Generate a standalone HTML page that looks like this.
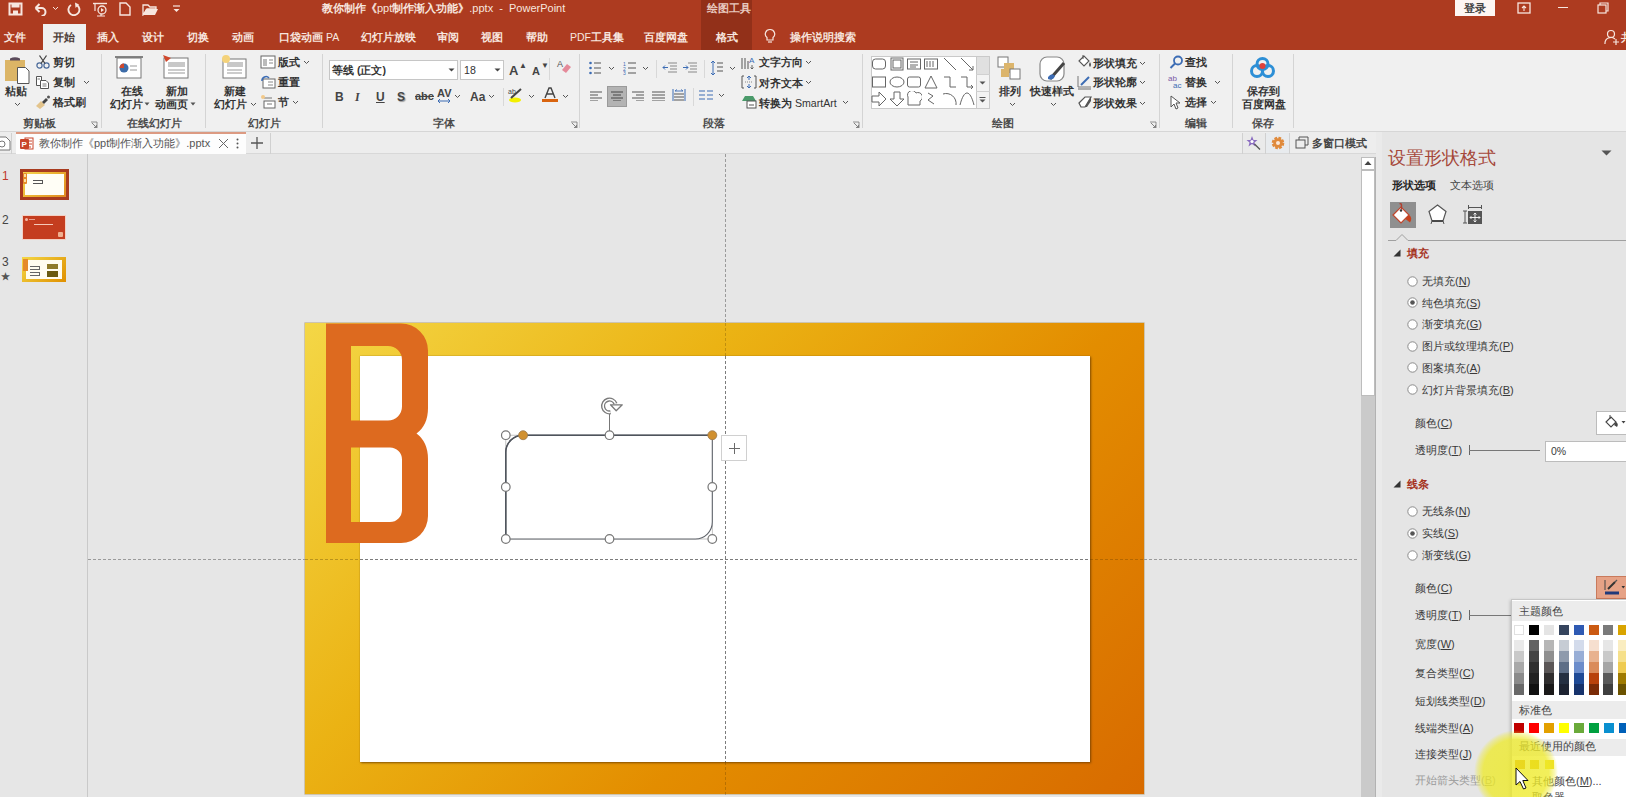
<!DOCTYPE html>
<html><head><meta charset="utf-8">
<style>
*{margin:0;padding:0;box-sizing:border-box}
html,body{width:1626px;height:797px;overflow:hidden;background:#e6e6e6;font-family:"Liberation Sans",sans-serif;position:relative}
.a{position:absolute}
.t{position:absolute;white-space:nowrap;line-height:1}
u{text-decoration:underline;text-underline-offset:1px}
</style></head><body>

<div class="a" style="left:0px;top:0px;width:1626px;height:50px;background:#ad3b20"></div>
<div class="a" style="left:701px;top:0px;width:51px;height:50px;background:#923019"></div>
<svg class="a" style="left:8px;top:2px;" width="15" height="14" viewBox="0 0 15 14"><path d="M1.5 1.5 H13.5 V12.5 H1.5 Z" fill="none" stroke="#f7e6df" stroke-width="2"/><rect x="3.5" y="1.5" width="8" height="4" fill="#f7e6df"/><rect x="5" y="8.5" width="5" height="4" fill="#f7e6df"/></svg>
<svg class="a" style="left:33px;top:2px;" width="15" height="14" viewBox="0 0 15 14"><path d="M2.5 6 L6.5 2 M2.5 6 L6.5 10" fill="none" stroke="#f7e6df" stroke-width="2"/><path d="M3 6 H8.5 A4 4 0 0 1 8.5 14" fill="none" stroke="#f7e6df" stroke-width="2"/></svg>
<svg class="a" style="left:52px;top:6px;" width="7" height="5" viewBox="0 0 7 5"><path d="M1 1 L3.5 3.5 L6 1" fill="none" stroke="#f7e6df" stroke-width="1"/></svg>
<svg class="a" style="left:67px;top:2px;" width="14" height="14" viewBox="0 0 14 14"><path d="M4 3 A5.5 5.5 0 1 0 9.5 2.8" fill="none" stroke="#f7e6df" stroke-width="1.9"/><path d="M8 0.5 L12 2.5 L8.5 6 Z" fill="#f7e6df"/></svg>
<svg class="a" style="left:92px;top:2px;" width="16" height="15" viewBox="0 0 16 15"><path d="M1 1.5 H15" stroke="#f7e6df" stroke-width="1.4"/><path d="M3 2 V9" stroke="#f7e6df" stroke-width="1.2"/><circle cx="10" cy="8" r="4" fill="none" stroke="#f7e6df" stroke-width="1.3"/><path d="M9 6 L12 8 L9 10Z" fill="#f7e6df"/><path d="M5 14 H13 M9 12 V14" stroke="#f7e6df" stroke-width="1.2"/></svg>
<svg class="a" style="left:119px;top:2px;" width="12" height="14" viewBox="0 0 12 14"><path d="M1 1 H7 L11 5 V13 H1 Z" fill="none" stroke="#f7e6df" stroke-width="1.4"/></svg>
<svg class="a" style="left:142px;top:3px;" width="17" height="13" viewBox="0 0 17 13"><path d="M1 2 H6 L8 4 H14 V6 H5 L1 12 Z" fill="none" stroke="#f7e6df" stroke-width="1.3"/><path d="M4 6 H16 L13 12 H1 Z" fill="#f7e6df"/></svg>
<svg class="a" style="left:172px;top:5px;" width="9" height="8" viewBox="0 0 9 8"><path d="M1 1 H8" stroke="#f7e6df" stroke-width="1.2"/><path d="M1.5 4 L4.5 7 L7.5 4Z" fill="#f7e6df"/></svg>
<div class="t" style="left:322px;top:3.0px;font-size:11px;color:#f7e6df;font-weight:600;">教你制作《<span style="font-weight:normal">ppt</span>制作渐入功能》<span style="font-weight:normal">.pptx &nbsp;- &nbsp;PowerPoint</span></div>
<div class="t" style="left:707px;top:3.0px;font-size:11px;color:#e8c9bf;font-weight:600;">绘图工具</div>
<div class="a" style="left:1455px;top:0px;width:40px;height:16px;background:#fdf6f3"></div>
<div class="t" style="left:1464px;top:3.0px;font-size:11px;color:#444;font-weight:600;">登录</div>
<svg class="a" style="left:1517px;top:2px;" width="14" height="12" viewBox="0 0 14 12"><rect x="1" y="1" width="12" height="10" fill="none" stroke="#f7e6df" stroke-width="1.3"/><path d="M7 9 V4 M5 6 L7 4 L9 6" fill="none" stroke="#f7e6df" stroke-width="1.1"/></svg>
<div class="a" style="left:1558px;top:7px;width:10px;height:1px;background:#f7e6df"></div>
<svg class="a" style="left:1597px;top:2px;" width="12" height="12" viewBox="0 0 12 12"><rect x="1" y="3" width="8" height="8" fill="none" stroke="#f7e6df" stroke-width="1.2"/><path d="M3 3 V1 H11 V9 H9" fill="none" stroke="#f7e6df" stroke-width="1.2"/></svg>
<div class="a" style="left:43px;top:24px;width:43px;height:27px;background:#f0f0f0"></div>
<div class="t" style="left:4px;top:31.8px;font-size:10.5px;color:#f7e6df;font-weight:600;">文件</div>
<div class="t" style="left:53px;top:31.8px;font-size:10.5px;color:#4a3a35;font-weight:600;">开始</div>
<div class="t" style="left:97px;top:31.8px;font-size:10.5px;color:#f7e6df;font-weight:600;">插入</div>
<div class="t" style="left:142px;top:31.8px;font-size:10.5px;color:#f7e6df;font-weight:600;">设计</div>
<div class="t" style="left:187px;top:31.8px;font-size:10.5px;color:#f7e6df;font-weight:600;">切换</div>
<div class="t" style="left:232px;top:31.8px;font-size:10.5px;color:#f7e6df;font-weight:600;">动画</div>
<div class="t" style="left:279px;top:31.8px;font-size:10.5px;color:#f7e6df;font-weight:600;">口袋动画 <span style="font-weight:normal">PA</span></div>
<div class="t" style="left:361px;top:31.8px;font-size:10.5px;color:#f7e6df;font-weight:600;">幻灯片放映</div>
<div class="t" style="left:437px;top:31.8px;font-size:10.5px;color:#f7e6df;font-weight:600;">审阅</div>
<div class="t" style="left:481px;top:31.8px;font-size:10.5px;color:#f7e6df;font-weight:600;">视图</div>
<div class="t" style="left:526px;top:31.8px;font-size:10.5px;color:#f7e6df;font-weight:600;">帮助</div>
<div class="t" style="left:570px;top:31.8px;font-size:10.5px;color:#f7e6df;font-weight:600;"><span style="font-weight:normal">PDF</span>工具集</div>
<div class="t" style="left:644px;top:31.8px;font-size:10.5px;color:#f7e6df;font-weight:600;">百度网盘</div>
<div class="t" style="left:716px;top:31.8px;font-size:10.5px;color:#f7e6df;font-weight:600;">格式</div>
<svg class="a" style="left:764px;top:28px;" width="12" height="17" viewBox="0 0 12 17"><path d="M6 1.5 A4.5 4.5 0 0 0 3 9.5 V12 H9 V9.5 A4.5 4.5 0 0 0 6 1.5Z" fill="none" stroke="#f7e6df" stroke-width="1.2"/><path d="M4 14 H8" stroke="#f7e6df" stroke-width="1.2"/></svg>
<div class="t" style="left:790px;top:31.8px;font-size:10.5px;color:#f7e6df;font-weight:600;">操作说明搜索</div>
<svg class="a" style="left:1604px;top:29px;" width="16" height="16" viewBox="0 0 16 16"><circle cx="7" cy="5" r="3.5" fill="none" stroke="#f7e6df" stroke-width="1.2"/><path d="M1 15 A6 6 0 0 1 11 10" fill="none" stroke="#f7e6df" stroke-width="1.2"/><path d="M12 10 V16 M9 13 H15" stroke="#f7e6df" stroke-width="1.2"/></svg>
<div class="t" style="left:1621px;top:31.8px;font-size:10.5px;color:#f7e6df;font-weight:600;">共享</div>
<div class="a" style="left:0px;top:50px;width:1626px;height:82px;background:#f0f0f0;border-bottom:1px solid #d6d6d6"></div>
<div class="a" style="left:101px;top:54px;width:1px;height:74px;background:#d4d4d4"></div>
<div class="a" style="left:204.5px;top:54px;width:1px;height:74px;background:#d4d4d4"></div>
<div class="a" style="left:321.5px;top:54px;width:1px;height:74px;background:#d4d4d4"></div>
<div class="a" style="left:579px;top:54px;width:1px;height:74px;background:#d4d4d4"></div>
<div class="a" style="left:862px;top:54px;width:1px;height:74px;background:#d4d4d4"></div>
<div class="a" style="left:1159px;top:54px;width:1px;height:74px;background:#d4d4d4"></div>
<div class="a" style="left:1232px;top:54px;width:1px;height:74px;background:#d4d4d4"></div>
<div class="a" style="left:1293px;top:54px;width:1px;height:74px;background:#d4d4d4"></div>
<div class="t" style="left:23px;top:117.7px;font-size:10.6px;color:#4a4a4a;font-weight:600;">剪贴板</div>
<div class="t" style="left:127px;top:117.7px;font-size:10.6px;color:#4a4a4a;font-weight:600;">在线幻灯片</div>
<div class="t" style="left:248px;top:117.7px;font-size:10.6px;color:#4a4a4a;font-weight:600;">幻灯片</div>
<div class="t" style="left:433px;top:117.7px;font-size:10.6px;color:#4a4a4a;font-weight:600;">字体</div>
<div class="t" style="left:703px;top:117.7px;font-size:10.6px;color:#4a4a4a;font-weight:600;">段落</div>
<div class="t" style="left:992px;top:117.7px;font-size:10.6px;color:#4a4a4a;font-weight:600;">绘图</div>
<div class="t" style="left:1185px;top:117.7px;font-size:10.6px;color:#4a4a4a;font-weight:600;">编辑</div>
<div class="t" style="left:1252px;top:117.7px;font-size:10.6px;color:#4a4a4a;font-weight:600;">保存</div>
<svg class="a" style="left:90px;top:121px;" width="8" height="8" viewBox="0 0 8 8"><path d="M1 1 H7 V7" fill="none" stroke="#777" stroke-width="0.8"/><path d="M2 2 L6.5 6.5 M4 6.5 H6.5 V4" fill="none" stroke="#777" stroke-width="0.9"/></svg>
<svg class="a" style="left:570px;top:121px;" width="8" height="8" viewBox="0 0 8 8"><path d="M1 1 H7 V7" fill="none" stroke="#777" stroke-width="0.8"/><path d="M2 2 L6.5 6.5 M4 6.5 H6.5 V4" fill="none" stroke="#777" stroke-width="0.9"/></svg>
<svg class="a" style="left:852px;top:121px;" width="8" height="8" viewBox="0 0 8 8"><path d="M1 1 H7 V7" fill="none" stroke="#777" stroke-width="0.8"/><path d="M2 2 L6.5 6.5 M4 6.5 H6.5 V4" fill="none" stroke="#777" stroke-width="0.9"/></svg>
<svg class="a" style="left:1149px;top:121px;" width="8" height="8" viewBox="0 0 8 8"><path d="M1 1 H7 V7" fill="none" stroke="#777" stroke-width="0.8"/><path d="M2 2 L6.5 6.5 M4 6.5 H6.5 V4" fill="none" stroke="#777" stroke-width="0.9"/></svg>
<svg class="a" style="left:4px;top:56px;" width="26" height="28" viewBox="0 0 26 28"><rect x="1" y="4" width="20" height="21" fill="#dcb566"/><path d="M6 4.5 H16 V2.5 Q11 0 6 2.5Z" fill="#5a4a5a"/><path d="M13.5 11.5 H21.5 L25 15 V27.5 H13.5 Z" fill="#fff" stroke="#555" stroke-width="1"/></svg>
<div class="t" style="left:5px;top:86.2px;font-size:10.6px;color:#333;font-weight:600;">粘贴</div>
<svg class="a" style="left:14px;top:102px;" width="7" height="5" viewBox="0 0 7 5"><path d="M1 1 L3.5 3.5 L6 1" fill="none" stroke="#555" stroke-width="1"/></svg>
<svg class="a" style="left:36px;top:55px;" width="14" height="14" viewBox="0 0 14 14"><circle cx="3.5" cy="10.5" r="2.6" fill="none" stroke="#4a6a9a" stroke-width="1.2"/><circle cx="10.5" cy="10.5" r="2.6" fill="none" stroke="#4a6a9a" stroke-width="1.2"/><path d="M5 8.5 L10.5 0.5 M9 8.5 L3.5 0.5" stroke="#444" stroke-width="1.3"/></svg>
<div class="t" style="left:53px;top:57.2px;font-size:10.6px;color:#333;font-weight:600;">剪切</div>
<svg class="a" style="left:35px;top:75px;" width="15" height="14" viewBox="0 0 15 14"><path d="M1.5 1.5 H6.5 V10.5 H1.5 Z" fill="#fff" stroke="#555" stroke-width="1"/><path d="M5.5 5.5 H11 L13.5 8 V13.5 H5.5 Z" fill="#fff" stroke="#555" stroke-width="1"/><path d="M7.5 9 H11.5 M7.5 11 H11.5" stroke="#555" stroke-width="0.8"/><path d="M2.5 4 H5" stroke="#555" stroke-width="0.8"/></svg>
<div class="t" style="left:53px;top:77.2px;font-size:10.6px;color:#333;font-weight:600;">复制</div>
<svg class="a" style="left:83px;top:80px;" width="7" height="5" viewBox="0 0 7 5"><path d="M1 1 L3.5 3.5 L6 1" fill="none" stroke="#555" stroke-width="1"/></svg>
<svg class="a" style="left:35px;top:94px;" width="16" height="16" viewBox="0 0 16 16"><path d="M1 12 L6 7 L10 11 L5 15 Z" fill="#e3c48c"/><path d="M7 8 L11 4 L13 6 L9 10 Z" fill="#444"/><circle cx="13.5" cy="3" r="1.5" fill="#555"/></svg>
<div class="t" style="left:53px;top:97.2px;font-size:10.6px;color:#333;font-weight:600;">格式刷</div>
<svg class="a" style="left:114px;top:55px;" width="32" height="25" viewBox="0 0 32 25"><path d="M1 2 H29" stroke="#666" stroke-width="1.6"/><rect x="3" y="3" width="24" height="20" fill="#fff" stroke="#777" stroke-width="1"/><circle cx="10" cy="13" r="4.5" fill="#3d6ca8"/><path d="M10 13 V8.5 A4.5 4.5 0 0 0 5.5 13Z" fill="#d0472b"/><path d="M16 11 H23 M16 15 H23" stroke="#999" stroke-width="1"/></svg>
<div class="t" style="left:121px;top:86.2px;font-size:10.6px;color:#333;font-weight:600;">在线</div>
<div class="t" style="left:110px;top:99.2px;font-size:10.6px;color:#333;font-weight:600;">幻灯片</div>
<svg class="a" style="left:144px;top:102px;" width="6" height="4" viewBox="0 0 6 4"><path d="M0.5 0.5 H5.5 L3 3.5Z" fill="#555"/></svg>
<svg class="a" style="left:162px;top:54px;" width="28" height="26" viewBox="0 0 28 26"><rect x="2" y="4" width="24" height="20" fill="#fff" stroke="#777" stroke-width="1"/><rect x="6" y="8" width="17" height="5" fill="#c8c8c8"/><path d="M6 16 H23 M6 19 H23" stroke="#999" stroke-width="1"/><path d="M1 1 L9 4 L4 8 Z" fill="#d0472b"/></svg>
<div class="t" style="left:166px;top:86.2px;font-size:10.6px;color:#333;font-weight:600;">新加</div>
<div class="t" style="left:155px;top:99.2px;font-size:10.6px;color:#333;font-weight:600;">动画页</div>
<svg class="a" style="left:190px;top:102px;" width="6" height="4" viewBox="0 0 6 4"><path d="M0.5 0.5 H5.5 L3 3.5Z" fill="#555"/></svg>
<svg class="a" style="left:220px;top:54px;" width="28" height="26" viewBox="0 0 28 26"><rect x="3" y="5" width="23" height="19" fill="#fff" stroke="#777" stroke-width="1"/><rect x="7" y="8" width="16" height="5" fill="#c8c8c8"/><path d="M7 16 H22 M7 19 H22" stroke="#999" stroke-width="1"/><circle cx="6" cy="5" r="4" fill="#f4d27a"/></svg>
<div class="t" style="left:224px;top:86.2px;font-size:10.6px;color:#333;font-weight:600;">新建</div>
<div class="t" style="left:214px;top:99.2px;font-size:10.6px;color:#333;font-weight:600;">幻灯片</div>
<svg class="a" style="left:250px;top:102px;" width="7" height="5" viewBox="0 0 7 5"><path d="M1 1 L3.5 3.5 L6 1" fill="none" stroke="#555" stroke-width="1"/></svg>
<svg class="a" style="left:260px;top:55px;" width="16" height="14" viewBox="0 0 16 14"><rect x="1" y="1" width="14" height="12" fill="#fff" stroke="#666" stroke-width="1"/><rect x="3" y="4" width="4" height="7" fill="#bbb"/><path d="M9 5 H13 M9 8 H13" stroke="#888" stroke-width="1"/></svg>
<div class="t" style="left:278px;top:57.2px;font-size:10.6px;color:#333;font-weight:600;">版式</div>
<svg class="a" style="left:303px;top:60px;" width="7" height="5" viewBox="0 0 7 5"><path d="M1 1 L3.5 3.5 L6 1" fill="none" stroke="#555" stroke-width="1"/></svg>
<svg class="a" style="left:260px;top:75px;" width="16" height="14" viewBox="0 0 16 14"><rect x="3" y="4" width="12" height="9" fill="#fff" stroke="#666" stroke-width="1"/><path d="M2 6 A4 4 0 0 1 9 3" fill="none" stroke="#3c6cb4" stroke-width="1.5"/><path d="M8 7 H13 M8 10 H13" stroke="#888" stroke-width="1"/></svg>
<div class="t" style="left:278px;top:77.2px;font-size:10.6px;color:#333;font-weight:600;">重置</div>
<svg class="a" style="left:261px;top:95px;" width="15" height="14" viewBox="0 0 15 14"><rect x="3" y="6" width="11" height="7" fill="#fff" stroke="#666" stroke-width="1"/><path d="M3 3 H11 M6 9 H11" stroke="#777" stroke-width="1"/><circle cx="2" cy="2" r="2" fill="#f2c98a"/></svg>
<div class="t" style="left:278px;top:97.2px;font-size:10.6px;color:#333;font-weight:600;">节</div>
<svg class="a" style="left:292px;top:100px;" width="7" height="5" viewBox="0 0 7 5"><path d="M1 1 L3.5 3.5 L6 1" fill="none" stroke="#555" stroke-width="1"/></svg>
<div class="a" style="left:329px;top:59.5px;width:129px;height:20px;background:#fff;border:1px solid #c6c6c6"></div>
<div class="t" style="left:332px;top:64.7px;font-size:10.6px;color:#333;font-weight:600;">等线 (正文)</div>
<svg class="a" style="left:448px;top:68px;" width="7" height="4" viewBox="0 0 7 4"><path d="M0.5 0.5 H6.5 L3.5 3.5Z" fill="#444"/></svg>
<div class="a" style="left:460px;top:59.5px;width:44px;height:20px;background:#fff;border:1px solid #c6c6c6"></div>
<div class="t" style="left:464px;top:64.7px;font-size:10.6px;color:#333;font-weight:normal;">18</div>
<svg class="a" style="left:494px;top:68px;" width="7" height="4" viewBox="0 0 7 4"><path d="M0.5 0.5 H6.5 L3.5 3.5Z" fill="#444"/></svg>
<div class="t" style="left:509px;top:64.0px;font-size:13px;color:#444;font-weight:600;">A</div>
<div class="t" style="left:519px;top:61.5px;font-size:6px;color:#444;font-weight:600;"><span style="font-size:8px">▲</span></div>
<div class="t" style="left:532px;top:66.0px;font-size:11px;color:#444;font-weight:600;">A</div>
<div class="t" style="left:541px;top:61.5px;font-size:6px;color:#444;font-weight:600;"><span style="font-size:8px">▼</span></div>
<div class="a" style="left:549px;top:58px;width:1px;height:22px;background:#d8d8d8"></div>
<svg class="a" style="left:556px;top:58px;" width="16" height="16" viewBox="0 0 16 16"><text x="1" y="9" font-size="9" fill="#555" font-family="Liberation Sans">A</text><path d="M6 12 L11 6 L15 9 L10 15 Z" fill="#e58a9a"/></svg>
<div class="t" style="left:335px;top:90.5px;font-size:12px;color:#444;font-weight:600;font-weight:bold">B</div>
<div class="t" style="left:355px;top:90.5px;font-size:12px;color:#444;font-weight:600;font-style:italic;font-family:Liberation Serif">I</div>
<div class="t" style="left:376px;top:90.5px;font-size:12px;color:#444;font-weight:600;text-decoration:underline">U</div>
<div class="t" style="left:397px;top:90.5px;font-size:12px;color:#444;font-weight:600;font-weight:bold;text-shadow:1px 1px 1px #999">S</div>
<div class="t" style="left:415px;top:91.0px;font-size:11px;color:#444;font-weight:600;"><s>abc</s></div>
<div class="t" style="left:437px;top:88.0px;font-size:11px;color:#444;font-weight:600;">AV</div>
<svg class="a" style="left:437px;top:98px;" width="14" height="6" viewBox="0 0 14 6"><path d="M1 3 H13 M1 3 L3 1 M1 3 L3 5 M13 3 L11 1 M13 3 L11 5" fill="none" stroke="#3c6cb4" stroke-width="1"/></svg>
<svg class="a" style="left:454px;top:94px;" width="7" height="5" viewBox="0 0 7 5"><path d="M1 1 L3.5 3.5 L6 1" fill="none" stroke="#555" stroke-width="1"/></svg>
<div class="t" style="left:470px;top:90.5px;font-size:12px;color:#444;font-weight:600;">Aa</div>
<svg class="a" style="left:488px;top:94px;" width="7" height="5" viewBox="0 0 7 5"><path d="M1 1 L3.5 3.5 L6 1" fill="none" stroke="#555" stroke-width="1"/></svg>
<div class="a" style="left:503px;top:88px;width:1px;height:18px;background:#d8d8d8"></div>
<svg class="a" style="left:507px;top:86px;" width="18" height="18" viewBox="0 0 18 18"><ellipse cx="8" cy="14" rx="6" ry="2.5" fill="#f3f000"/><path d="M4 12 L14 3" stroke="#444" stroke-width="2"/><text x="1" y="8" font-size="7" fill="#444" font-family="Liberation Sans">ab</text></svg>
<svg class="a" style="left:528px;top:94px;" width="7" height="5" viewBox="0 0 7 5"><path d="M1 1 L3.5 3.5 L6 1" fill="none" stroke="#555" stroke-width="1"/></svg>
<svg class="a" style="left:541px;top:86px;" width="18" height="18" viewBox="0 0 18 18"><path d="M4 12 L8 2 H10 L14 12 M6 8 H12" fill="none" stroke="#444" stroke-width="1.4"/><rect x="1" y="13" width="16" height="3" fill="#d9640f"/></svg>
<svg class="a" style="left:562px;top:94px;" width="7" height="5" viewBox="0 0 7 5"><path d="M1 1 L3.5 3.5 L6 1" fill="none" stroke="#555" stroke-width="1"/></svg>
<svg class="a" style="left:589px;top:61px;" width="13" height="14" viewBox="0 0 13 14"><circle cx="1.5" cy="2" r="1.3" fill="#3c6cb4"/><circle cx="1.5" cy="7" r="1.3" fill="#3c6cb4"/><circle cx="1.5" cy="12" r="1.3" fill="#3c6cb4"/><path d="M5 2 H12 M5 7 H12 M5 12 H12" stroke="#555" stroke-width="1"/></svg>
<svg class="a" style="left:608px;top:66px;" width="7" height="5" viewBox="0 0 7 5"><path d="M1 1 L3.5 3.5 L6 1" fill="none" stroke="#555" stroke-width="1"/></svg>
<svg class="a" style="left:623px;top:61px;" width="14" height="14" viewBox="0 0 14 14"><text x="0" y="5" font-size="5" fill="#3c6cb4" font-family="Liberation Sans">1</text><text x="0" y="10" font-size="5" fill="#3c6cb4" font-family="Liberation Sans">2</text><text x="0" y="14" font-size="5" fill="#3c6cb4" font-family="Liberation Sans">3</text><path d="M5 2 H13 M5 7 H13 M5 12 H13" stroke="#555" stroke-width="1"/></svg>
<svg class="a" style="left:642px;top:66px;" width="7" height="5" viewBox="0 0 7 5"><path d="M1 1 L3.5 3.5 L6 1" fill="none" stroke="#555" stroke-width="1"/></svg>
<div class="a" style="left:656px;top:60px;width:1px;height:18px;background:#d8d8d8"></div>
<svg class="a" style="left:662px;top:62px;" width="16" height="12" viewBox="0 0 16 12"><path d="M6 1 H15 M8 4 H15 M8 7 H15 M6 10 H15" stroke="#888" stroke-width="1"/><path d="M1 5.5 H6 M1 5.5 L3 3.5 M1 5.5 L3 7.5" fill="none" stroke="#3c6cb4" stroke-width="1"/></svg>
<svg class="a" style="left:682px;top:62px;" width="16" height="12" viewBox="0 0 16 12"><path d="M6 1 H15 M8 4 H15 M8 7 H15 M6 10 H15" stroke="#888" stroke-width="1"/><path d="M1 5.5 H6 M6 5.5 L4 3.5 M6 5.5 L4 7.5" fill="none" stroke="#3c6cb4" stroke-width="1"/></svg>
<div class="a" style="left:704px;top:60px;width:1px;height:18px;background:#d8d8d8"></div>
<svg class="a" style="left:710px;top:60px;" width="14" height="16" viewBox="0 0 14 16"><path d="M3 1 V15 M1 3 L3 1 L5 3 M1 13 L3 15 L5 13" fill="none" stroke="#3c6cb4" stroke-width="1"/><path d="M7 3 H13 M7 7 H13 M7 11 H13" stroke="#555" stroke-width="1"/></svg>
<svg class="a" style="left:729px;top:66px;" width="7" height="5" viewBox="0 0 7 5"><path d="M1 1 L3.5 3.5 L6 1" fill="none" stroke="#555" stroke-width="1"/></svg>
<div class="a" style="left:607px;top:86px;width:20px;height:21px;background:#b3b3b3;border:1px solid #9a9a9a"></div>
<svg class="a" style="left:590px;top:91px;" width="13" height="10" viewBox="0 0 13 10"><path d="M0 1 H12 M0 4 H8 M0 7 H12 M0 10 H8" stroke="#555" stroke-width="1"/></svg>
<svg class="a" style="left:611px;top:91px;" width="13" height="10" viewBox="0 0 13 10"><path d="M0 1 H12 M2 4 H10 M0 7 H12 M2 10 H10" stroke="#444" stroke-width="1"/></svg>
<svg class="a" style="left:632px;top:91px;" width="13" height="10" viewBox="0 0 13 10"><path d="M0 1 H12 M4 4 H12 M0 7 H12 M4 10 H12" stroke="#555" stroke-width="1"/></svg>
<svg class="a" style="left:652px;top:91px;" width="13" height="10" viewBox="0 0 13 10"><path d="M0 1 H13 M0 4 H13 M0 7 H13 M0 10 H13" stroke="#555" stroke-width="1"/></svg>
<svg class="a" style="left:672px;top:88px;" width="14" height="14" viewBox="0 0 14 14"><path d="M1 1 V13 M13 1 V13" stroke="#3c6cb4" stroke-width="1"/><path d="M3 3 H11 M3 3 L5 1.5 M11 3 L9 1.5" fill="none" stroke="#3c6cb4" stroke-width="0.9"/><path d="M2 6 H12 M2 9 H12 M2 12 H12" stroke="#555" stroke-width="1"/></svg>
<div class="a" style="left:693px;top:88px;width:1px;height:18px;background:#d8d8d8"></div>
<svg class="a" style="left:699px;top:90px;" width="14" height="11" viewBox="0 0 14 11"><path d="M0 1 H6 M0 5 H6 M0 9 H6 M8 1 H14 M8 5 H14 M8 9 H14" stroke="#3c6cb4" stroke-width="1.2"/></svg>
<svg class="a" style="left:718px;top:93px;" width="7" height="5" viewBox="0 0 7 5"><path d="M1 1 L3.5 3.5 L6 1" fill="none" stroke="#555" stroke-width="1"/></svg>
<svg class="a" style="left:741px;top:55px;" width="16" height="15" viewBox="0 0 16 15"><path d="M1 3 V14 M4 3 V14 M7 6 V14" stroke="#555" stroke-width="1"/><text x="8" y="8" font-size="8" fill="#3c6cb4" font-family="Liberation Sans">A</text><path d="M11 10 V14 M9.5 12.5 L11 14 L12.5 12.5" fill="none" stroke="#555" stroke-width="0.9"/></svg>
<div class="t" style="left:759px;top:57.2px;font-size:10.6px;color:#333;font-weight:600;">文字方向</div>
<svg class="a" style="left:805px;top:60px;" width="7" height="5" viewBox="0 0 7 5"><path d="M1 1 L3.5 3.5 L6 1" fill="none" stroke="#555" stroke-width="1"/></svg>
<svg class="a" style="left:741px;top:75px;" width="16" height="14" viewBox="0 0 16 14"><path d="M3 1 H1 V13 H3 M13 1 H15 V13 H13" fill="none" stroke="#555" stroke-width="1"/><path d="M8 1 V5 M6 3 L8 1 L10 3 M8 13 V9 M6 11 L8 13 L10 11" fill="none" stroke="#3c6cb4" stroke-width="1"/><path d="M4 7 H12" stroke="#888" stroke-width="1" stroke-dasharray="1 1"/></svg>
<div class="t" style="left:759px;top:77.7px;font-size:10.6px;color:#333;font-weight:600;">对齐文本</div>
<svg class="a" style="left:805px;top:80px;" width="7" height="5" viewBox="0 0 7 5"><path d="M1 1 L3.5 3.5 L6 1" fill="none" stroke="#555" stroke-width="1"/></svg>
<svg class="a" style="left:741px;top:95px;" width="16" height="14" viewBox="0 0 16 14"><path d="M1 6 L4 1 H12 L15 6 Z" fill="#4a9a6a"/><rect x="6" y="6" width="9" height="7" fill="#fff" stroke="#555" stroke-width="1"/><path d="M8 10 H13" stroke="#555" stroke-width="1"/></svg>
<div class="t" style="left:759px;top:98.2px;font-size:10.6px;color:#333;font-weight:600;">转换为 <span style="font-weight:normal">SmartArt</span></div>
<svg class="a" style="left:842px;top:100px;" width="7" height="5" viewBox="0 0 7 5"><path d="M1 1 L3.5 3.5 L6 1" fill="none" stroke="#555" stroke-width="1"/></svg>
<div class="a" style="left:870.5px;top:55.5px;width:119px;height:53px;background:#fff;border:1px solid #c9c9c9"></div>
<div class="a" style="left:976px;top:55.5px;width:13.5px;height:53px;background:#f3f3f3;border:1px solid #c9c9c9"></div>
<div class="a" style="left:977px;top:56.5px;width:11.5px;height:17px;background:#e0e0e0"></div>
<div class="a" style="left:976px;top:73.5px;width:13.5px;height:1px;background:#d0d0d0"></div>
<div class="a" style="left:976px;top:91px;width:13.5px;height:1px;background:#d0d0d0"></div>
<svg class="a" style="left:979px;top:81px;" width="7" height="4" viewBox="0 0 7 4"><path d="M0.5 0.5 H6.5 L3.5 3.5Z" fill="#555"/></svg>
<svg class="a" style="left:979px;top:97px;" width="7" height="7" viewBox="0 0 7 7"><path d="M0.5 0.5 H6.5" stroke="#555" stroke-width="1"/><path d="M0.5 2.5 H6.5 L3.5 5.5Z" fill="#555"/></svg>
<svg class="a" style="left:871.4px;top:56.400000000000006px;" width="16" height="16" viewBox="0 0 16 16"><g transform="translate(8 8)"><rect x="-6.5" y="-5" width="13" height="10" rx="3" fill="none" stroke="#666" stroke-width="1"/></g></svg>
<svg class="a" style="left:888.9px;top:56.400000000000006px;" width="16" height="16" viewBox="0 0 16 16"><g transform="translate(8 8)"><rect x="-6" y="-6" width="12" height="12" fill="none" stroke="#666" stroke-width="1"/><rect x="-4" y="-4" width="8" height="8" fill="none" stroke="#666" stroke-width="1"/></g></svg>
<svg class="a" style="left:905.5px;top:56.400000000000006px;" width="16" height="16" viewBox="0 0 16 16"><g transform="translate(8 8)"><rect x="-6.5" y="-5" width="13" height="10" fill="none" stroke="#666" stroke-width="1"/><path d="M-4 -2 H4 M-4 1 H4 M-4 3 H2" fill="none" stroke="#666" stroke-width="1"/></g></svg>
<svg class="a" style="left:923px;top:56.400000000000006px;" width="16" height="16" viewBox="0 0 16 16"><g transform="translate(8 8)"><rect x="-6.5" y="-5" width="13" height="10" fill="none" stroke="#666" stroke-width="1"/><path d="M-4 -3 V3 M-1 -3 V3 M2 -3 V3" fill="none" stroke="#666" stroke-width="1"/></g></svg>
<svg class="a" style="left:941.5px;top:56.400000000000006px;" width="16" height="16" viewBox="0 0 16 16"><g transform="translate(8 8)"><path d="M-6 -6 L6 6" fill="none" stroke="#666" stroke-width="1"/></g></svg>
<svg class="a" style="left:958.6px;top:56.400000000000006px;" width="16" height="16" viewBox="0 0 16 16"><g transform="translate(8 8)"><path d="M-6 -6 L6 6 M6 6 H2 M6 6 V2" fill="none" stroke="#666" stroke-width="1"/></g></svg>
<svg class="a" style="left:871.4px;top:74.3px;" width="16" height="16" viewBox="0 0 16 16"><g transform="translate(8 8)"><rect x="-6.5" y="-5" width="13" height="10" fill="none" stroke="#666" stroke-width="1"/></g></svg>
<svg class="a" style="left:888.9px;top:74.3px;" width="16" height="16" viewBox="0 0 16 16"><g transform="translate(8 8)"><ellipse cx="0" cy="0" rx="7" ry="5" fill="none" stroke="#666" stroke-width="1"/></g></svg>
<svg class="a" style="left:905.5px;top:74.3px;" width="16" height="16" viewBox="0 0 16 16"><g transform="translate(8 8)"><rect x="-6.5" y="-5" width="13" height="10" rx="2" fill="none" stroke="#666" stroke-width="1"/></g></svg>
<svg class="a" style="left:923px;top:74.3px;" width="16" height="16" viewBox="0 0 16 16"><g transform="translate(8 8)"><path d="M-6 6 L0 -6 L6 6 Z" fill="none" stroke="#666" stroke-width="1"/></g></svg>
<svg class="a" style="left:941.5px;top:74.3px;" width="16" height="16" viewBox="0 0 16 16"><g transform="translate(8 8)"><path d="M-6 -5 H0 V5 H6" fill="none" stroke="#666" stroke-width="1"/></g></svg>
<svg class="a" style="left:958.6px;top:74.3px;" width="16" height="16" viewBox="0 0 16 16"><g transform="translate(8 8)"><path d="M-6 -5 H0 V5 H6 M4 3 L6 5 L4 7" fill="none" stroke="#666" stroke-width="1"/></g></svg>
<svg class="a" style="left:871.4px;top:90.9px;" width="16" height="16" viewBox="0 0 16 16"><g transform="translate(8 8)"><path d="M-7 -3 H0 V-7 L7 0 L0 7 V3 H-7 Z" fill="none" stroke="#666" stroke-width="1"/></g></svg>
<svg class="a" style="left:888.9px;top:90.9px;" width="16" height="16" viewBox="0 0 16 16"><g transform="translate(8 8)"><path d="M-3 -7 H3 V0 H7 L0 7 L-7 0 H-3 Z" fill="none" stroke="#666" stroke-width="1"/></g></svg>
<svg class="a" style="left:905.5px;top:90.9px;" width="16" height="16" viewBox="0 0 16 16"><g transform="translate(8 8)"><path d="M-6 6 V-2 A4 4 0 0 1 2 -6 A4 4 0 0 1 6 2 V6 Z" fill="none" stroke="#666" stroke-width="1"/></g></svg>
<svg class="a" style="left:923px;top:90.9px;" width="16" height="16" viewBox="0 0 16 16"><g transform="translate(8 8)"><path d="M-3 -6 L2 -3 L-3 1 L3 5" fill="none" stroke="#666" stroke-width="1"/></g></svg>
<svg class="a" style="left:941.5px;top:90.9px;" width="16" height="16" viewBox="0 0 16 16"><g transform="translate(8 8)"><path d="M-7 -5 A10 10 0 0 1 6 6" fill="none" stroke="#666" stroke-width="1"/></g></svg>
<svg class="a" style="left:958.6px;top:90.9px;" width="16" height="16" viewBox="0 0 16 16"><g transform="translate(8 8)"><path d="M-7 6 C-3 -10 3 -10 7 6" fill="none" stroke="#666" stroke-width="1"/></g></svg>
<svg class="a" style="left:997px;top:56px;" width="25" height="25" viewBox="0 0 25 25"><rect x="1" y="1" width="10" height="10" fill="#fff" stroke="#777" stroke-width="1"/><rect x="7" y="7" width="10" height="10" fill="#dcb56c"/><rect x="13" y="13" width="10" height="10" fill="#fff" stroke="#777" stroke-width="1"/><rect x="4" y="13" width="8" height="8" fill="#dcb56c"/></svg>
<div class="t" style="left:999px;top:86.2px;font-size:10.6px;color:#333;font-weight:600;">排列</div>
<svg class="a" style="left:1009px;top:102px;" width="7" height="5" viewBox="0 0 7 5"><path d="M1 1 L3.5 3.5 L6 1" fill="none" stroke="#555" stroke-width="1"/></svg>
<svg class="a" style="left:1038px;top:55px;" width="30" height="30" viewBox="0 0 30 30"><rect x="2" y="2" width="24" height="24" rx="7" fill="#fff" stroke="#888" stroke-width="1.2"/><path d="M12 24 L26 8" stroke="#444" stroke-width="3"/><path d="M10 22 Q14 17 17 21 Q15 26 10 24Z" fill="#3c6cb4"/></svg>
<div class="t" style="left:1030px;top:86.2px;font-size:10.6px;color:#333;font-weight:600;">快速样式</div>
<svg class="a" style="left:1050px;top:102px;" width="7" height="5" viewBox="0 0 7 5"><path d="M1 1 L3.5 3.5 L6 1" fill="none" stroke="#555" stroke-width="1"/></svg>
<svg class="a" style="left:1077px;top:54px;" width="16" height="15" viewBox="0 0 16 15"><path d="M2 7 L7 2 L12 7 L7 12 Z" fill="#fff" stroke="#555" stroke-width="1.1"/><path d="M6 1 V5" stroke="#555" stroke-width="1"/><path d="M13 8 Q15 11 13 13 Q11 11 13 8Z" fill="#555"/></svg>
<div class="t" style="left:1093px;top:58.2px;font-size:10.6px;color:#333;font-weight:600;">形状填充</div>
<svg class="a" style="left:1139px;top:61px;" width="7" height="5" viewBox="0 0 7 5"><path d="M1 1 L3.5 3.5 L6 1" fill="none" stroke="#555" stroke-width="1"/></svg>
<svg class="a" style="left:1077px;top:74px;" width="16" height="16" viewBox="0 0 16 16"><path d="M1 2 V13 H14" fill="none" stroke="#777" stroke-width="1"/><path d="M4 11 L12 3" stroke="#3c6cb4" stroke-width="2"/><path d="M1 15 H14" stroke="#999" stroke-width="1.5"/></svg>
<div class="t" style="left:1093px;top:77.2px;font-size:10.6px;color:#333;font-weight:600;">形状轮廓</div>
<svg class="a" style="left:1139px;top:80px;" width="7" height="5" viewBox="0 0 7 5"><path d="M1 1 L3.5 3.5 L6 1" fill="none" stroke="#555" stroke-width="1"/></svg>
<svg class="a" style="left:1077px;top:95px;" width="16" height="14" viewBox="0 0 16 14"><path d="M2 8 L8 2 H14 L8 12 H4 Z" fill="#fff" stroke="#555" stroke-width="1.2"/><path d="M8 12 L14 2 V6 L10 12Z" fill="#555"/></svg>
<div class="t" style="left:1093px;top:98.2px;font-size:10.6px;color:#333;font-weight:600;">形状效果</div>
<svg class="a" style="left:1139px;top:101px;" width="7" height="5" viewBox="0 0 7 5"><path d="M1 1 L3.5 3.5 L6 1" fill="none" stroke="#555" stroke-width="1"/></svg>
<svg class="a" style="left:1169px;top:55px;" width="15" height="14" viewBox="0 0 15 14"><circle cx="9" cy="5.5" r="4" fill="none" stroke="#3c6cb4" stroke-width="1.8"/><path d="M6 8.5 L1.5 13" stroke="#3c6cb4" stroke-width="2"/></svg>
<div class="t" style="left:1185px;top:57.2px;font-size:10.6px;color:#333;font-weight:600;">查找</div>
<svg class="a" style="left:1167px;top:74px;" width="17" height="15" viewBox="0 0 17 15"><text x="1" y="7" font-size="8" fill="#7b5aa6" font-family="Liberation Sans">ab</text><text x="6" y="14" font-size="8" fill="#3c6cb4" font-family="Liberation Sans">ac</text></svg>
<div class="t" style="left:1185px;top:77.2px;font-size:10.6px;color:#333;font-weight:600;">替换</div>
<svg class="a" style="left:1214px;top:80px;" width="7" height="5" viewBox="0 0 7 5"><path d="M1 1 L3.5 3.5 L6 1" fill="none" stroke="#555" stroke-width="1"/></svg>
<svg class="a" style="left:1170px;top:95px;" width="12" height="15" viewBox="0 0 12 15"><path d="M1 1 V12 L4 9 L6 14 L8 13 L6 8 H10 Z" fill="#fff" stroke="#555" stroke-width="1"/></svg>
<div class="t" style="left:1185px;top:97.2px;font-size:10.6px;color:#333;font-weight:600;">选择</div>
<svg class="a" style="left:1210px;top:100px;" width="7" height="5" viewBox="0 0 7 5"><path d="M1 1 L3.5 3.5 L6 1" fill="none" stroke="#555" stroke-width="1"/></svg>
<svg class="a" style="left:1250px;top:56px;" width="25" height="24" viewBox="0 0 25 24"><circle cx="12.5" cy="8" r="5.5" fill="none" stroke="#2d8fd6" stroke-width="3"/><circle cx="7" cy="15" r="5.5" fill="none" stroke="#2d8fd6" stroke-width="3"/><circle cx="18" cy="15" r="5.5" fill="none" stroke="#2d8fd6" stroke-width="3"/><circle cx="12.5" cy="10" r="3" fill="#e0413a"/></svg>
<div class="t" style="left:1247px;top:86.2px;font-size:10.6px;color:#333;font-weight:600;">保存到</div>
<div class="t" style="left:1242px;top:99.2px;font-size:10.6px;color:#333;font-weight:600;">百度网盘</div>
<div class="a" style="left:0px;top:132px;width:1376px;height:22px;background:#ededed;border-bottom:1px solid #d8d8d8"></div>
<div class="a" style="left:16px;top:132px;width:230px;height:22px;background:#fdfdfd;border-top:2px solid #dc9a82"></div>
<svg class="a" style="left:0px;top:136px;" width="12" height="15" viewBox="0 0 12 15"><path d="M-4 1 H6 L10 5 V14 H-4" fill="#fff" stroke="#777" stroke-width="1"/><circle cx="2" cy="8" r="3" fill="none" stroke="#777" stroke-width="1"/></svg>
<div class="a" style="left:11px;top:133px;width:1px;height:21px;background:#d0d0d0"></div>
<svg class="a" style="left:19px;top:136px;" width="15" height="15" viewBox="0 0 15 15"><rect x="6" y="2" width="8" height="11" fill="#fff" stroke="#c9452a" stroke-width="1"/><path d="M8 5 H13 M8 8 H13 M8 11 H12" stroke="#c9452a" stroke-width="1"/><rect x="1" y="3" width="9" height="10" rx="1" fill="#c9452a"/><text x="2.5" y="11" font-size="8" font-weight="bold" fill="#fff" font-family="Liberation Sans">P</text></svg>
<div class="t" style="left:39px;top:138.0px;font-size:11px;color:#555;font-weight:600;font-weight:normal">教你制作《ppt制作渐入功能》.pptx</div>
<svg class="a" style="left:218px;top:138px;" width="11" height="11" viewBox="0 0 11 11"><path d="M1 1 L10 10 M10 1 L1 10" stroke="#666" stroke-width="1"/></svg>
<svg class="a" style="left:236px;top:138px;" width="3" height="11" viewBox="0 0 3 11"><circle cx="1.5" cy="1.5" r="1" fill="#555"/><circle cx="1.5" cy="5.5" r="1" fill="#555"/><circle cx="1.5" cy="9.5" r="1" fill="#555"/></svg>
<svg class="a" style="left:251px;top:137px;" width="12" height="12" viewBox="0 0 12 12"><path d="M6 0 V12 M0 6 H12" stroke="#555" stroke-width="1.3"/></svg>
<div class="a" style="left:270px;top:133px;width:1px;height:21px;background:#d0d0d0"></div>
<div class="a" style="left:1242px;top:133px;width:1px;height:21px;background:#d0d0d0"></div>
<div class="a" style="left:1265px;top:133px;width:1px;height:21px;background:#d0d0d0"></div>
<div class="a" style="left:1289px;top:133px;width:1px;height:21px;background:#d0d0d0"></div>
<div class="a" style="left:1243px;top:133px;width:22px;height:20px;background:#eaeaea"></div>
<div class="a" style="left:1266px;top:133px;width:23px;height:20px;background:#e8ebee"></div>
<svg class="a" style="left:1246px;top:135px;" width="16" height="16" viewBox="0 0 16 16"><path d="M6 1 L7.5 5 L11.5 5 L8.5 7.5 L9.5 11.5 L6 9 L2.5 11.5 L3.5 7.5 L0.5 5 L4.5 5 Z" fill="#8a6cc0"/><circle cx="6" cy="6.5" r="1.6" fill="#fff"/><path d="M8.5 9 L14 14.5" stroke="#555" stroke-width="1.3"/></svg>
<svg class="a" style="left:1271px;top:136px;" width="14" height="14" viewBox="0 0 14 14"><g transform="translate(7 7)"><circle r="4.8" fill="#e08a3c"/><circle r="5" fill="none" stroke="#e08a3c" stroke-width="2.6" stroke-dasharray="2.6 1.3"/><circle r="2" fill="#fbe8d8"/></g></svg>
<svg class="a" style="left:1295px;top:136px;" width="14" height="13" viewBox="0 0 14 13"><rect x="1" y="4" width="9" height="8" fill="none" stroke="#555" stroke-width="1"/><path d="M4 4 V1 H13 V9 H10" fill="none" stroke="#555" stroke-width="1"/></svg>
<div class="t" style="left:1312px;top:138.2px;font-size:10.5px;color:#444;font-weight:600;">多窗口模式</div>
<div class="a" style="left:0px;top:154px;width:1376px;height:643px;background:#e6e6e6"></div>
<div class="a" style="left:87px;top:154px;width:1px;height:643px;background:#c9c9c9"></div>
<div class="t" style="left:2px;top:170.0px;font-size:12px;color:#c0392b;font-weight:600;font-weight:normal">1</div>
<div class="t" style="left:2px;top:213.5px;font-size:12px;color:#444;font-weight:600;font-weight:normal">2</div>
<div class="t" style="left:2px;top:255.5px;font-size:12px;color:#444;font-weight:600;font-weight:normal">3</div>
<div class="t" style="left:1px;top:271.5px;font-size:10px;color:#555;font-weight:600;">★</div>
<div class="a" style="left:19.5px;top:169px;width:49px;height:31px;border:3px solid #a83b1f;background:#fff"></div>
<div class="a" style="left:22.5px;top:172px;width:43px;height:25px;background:linear-gradient(135deg,#f6d650,#eab030 50%,#e08a20);"></div>
<div class="a" style="left:24.5px;top:174px;width:39px;height:21px;background:#fffef6"></div>
<div class="a" style="left:23px;top:172.5px;width:4px;height:11px;background:#e58a2a;border-radius:1px"></div>
<div class="a" style="left:24px;top:174px;width:2px;height:3px;background:#fbe0a0"></div>
<div class="a" style="left:24px;top:178.5px;width:2px;height:3.5px;background:#fbe0a0"></div>
<div class="a" style="left:33px;top:180px;width:10px;height:4px;border:1px solid #555;border-left:none"></div>
<div class="a" style="left:22px;top:215px;width:44px;height:25px;background:#c43d1f;border:1px solid #f3d0c4"></div>
<div class="a" style="left:24.5px;top:218px;width:3px;height:3px;background:#f3b9a6;border-radius:2px"></div>
<div class="a" style="left:29px;top:218.5px;width:6px;height:1px;background:#e8a090"></div>
<div class="a" style="left:34px;top:223.5px;width:19px;height:1.5px;background:#f5c8b8"></div>
<div class="a" style="left:58px;top:232px;width:5px;height:5px;background:#f0b090;border-radius:1px"></div>
<div class="a" style="left:22px;top:257px;width:44px;height:25px;background:linear-gradient(135deg,#f4d746,#e8b020 55%,#e09000);"></div>
<div class="a" style="left:26px;top:260px;width:36px;height:19px;background:#fffcf0"></div>
<div class="a" style="left:23px;top:259px;width:5px;height:12px;background:#e58a2a"></div>
<div class="a" style="left:30px;top:266px;width:10px;height:4px;border:1px solid #666;border-left:none"></div>
<div class="a" style="left:30px;top:272px;width:10px;height:4px;border:1px solid #666;border-left:none"></div>
<div class="a" style="left:47px;top:264px;width:11px;height:5px;background:#8e7a2a"></div>
<div class="a" style="left:47px;top:271px;width:11px;height:6px;background:#6a5a10"></div>
<div class="a" style="left:305px;top:323px;width:839px;height:471px;background:linear-gradient(135deg,#f4d746 0%,#ebb314 33%,#e38d00 62%,#d86b00 100%);box-shadow:0 0 0 0.6px rgba(150,120,50,.5)"></div>
<div class="a" style="left:360px;top:356px;width:730px;height:406px;background:#fff;box-shadow:0 0 1px rgba(120,80,0,.55),1px 1px 2px rgba(100,55,0,.75)"></div>
<svg class="a" style="left:300px;top:318px;" width="140" height="230" viewBox="0 0 140 230"><g transform="translate(-300 -318)"><path fill-rule="evenodd" fill="#dd6a1f" d="M326 323.5 H401 A27 27 0 0 1 428 350.5 V408 Q428 425 416.5 433.5 Q428 442 428 459 V516 A27 27 0 0 1 401 543 H326 Z M351 346 H388 A14 14 0 0 1 402 360 V406.5 A14 14 0 0 1 388 420.5 H351 Z M351 447.5 H390 A12 12 0 0 1 402 459.5 V510 A12 12 0 0 1 390 522 H351 Z"/></g></svg>
<svg class="a" style="left:725px;top:154px;" width="1" height="643" viewBox="0 0 1 643"><path d="M0.5 0 V169" stroke="#9a9a9a" stroke-width="1" stroke-dasharray="3 2"/><path d="M0.5 169 V202" stroke="rgba(60,40,0,.25)" stroke-width="1" stroke-dasharray="3 2"/><path d="M0.5 202 V608" stroke="#7c7c7c" stroke-width="1" stroke-dasharray="3 2"/><path d="M0.5 608 V643" stroke="rgba(60,40,0,.25)" stroke-width="1" stroke-dasharray="3 2"/></svg>
<svg class="a" style="left:88px;top:559px;" width="1270" height="1" viewBox="0 0 1270 1"><path d="M0 0.5 H217" stroke="#9a9a9a" stroke-width="1" stroke-dasharray="3 2"/><path d="M217 0.5 H272" stroke="rgba(60,40,0,.3)" stroke-width="1" stroke-dasharray="3 2"/><path d="M272 0.5 H1002" stroke="#7c7c7c" stroke-width="1" stroke-dasharray="3 2"/><path d="M1002 0.5 H1056" stroke="rgba(60,40,0,.25)" stroke-width="1" stroke-dasharray="3 2"/><path d="M1056 0.5 H1270" stroke="#9a9a9a" stroke-width="1" stroke-dasharray="3 2"/></svg>
<svg class="a" style="left:495px;top:390px;" width="240" height="160" viewBox="0 0 240 160"><g transform="translate(-495 -390)"><rect x="505.8" y="435.2" width="206.5" height="103.8" fill="none" stroke="#b5b5b5" stroke-width="0.8"/><path d="M523 435.2 H712.3 V522 A17 17 0 0 1 695.3 539 H505.8 V452.2 A17 17 0 0 1 523 435.2 Z" fill="#fff" stroke="#60646b" stroke-width="1.1"/><path d="M505.8 539 V452.2 A17 17 0 0 1 523 435.2 H712.3" fill="none" stroke="#4f545c" stroke-width="1.5"/><path d="M609.5 413 V431" stroke="#777" stroke-width="1"/><path d="M610.6 412.3 A6.4 6.4 0 1 1 615.5 403.8" fill="none" stroke="#7a7a7a" stroke-width="4.2"/><path d="M610.6 412.3 A6.4 6.4 0 1 1 615.5 403.8" fill="none" stroke="#fff" stroke-width="1.5"/><path d="M610.5 404.8 L622.3 404.8 L616.2 410.8 Z" fill="#fff" stroke="#7a7a7a" stroke-width="1.3" stroke-linejoin="round"/><circle cx="505.8" cy="435.2" r="4.3" fill="#fff" stroke="#777" stroke-width="1.2"/><circle cx="609.5" cy="435.2" r="4.3" fill="#fff" stroke="#777" stroke-width="1.2"/><circle cx="505.8" cy="487" r="4.3" fill="#fff" stroke="#777" stroke-width="1.2"/><circle cx="712.3" cy="487" r="4.3" fill="#fff" stroke="#777" stroke-width="1.2"/><circle cx="505.8" cy="539" r="4.3" fill="#fff" stroke="#777" stroke-width="1.2"/><circle cx="609.5" cy="539" r="4.3" fill="#fff" stroke="#777" stroke-width="1.2"/><circle cx="712.3" cy="539" r="4.3" fill="#fff" stroke="#777" stroke-width="1.2"/><circle cx="523.1" cy="435.2" r="4.5" fill="#d09030" stroke="#9a7a50" stroke-width="0.8"/><circle cx="712.3" cy="435.2" r="4.5" fill="#d09030" stroke="#9a7a50" stroke-width="0.8"/></g></svg>
<div class="a" style="left:721px;top:435px;width:26px;height:26px;background:#fff;border:1px solid #d0d0d0"></div>
<svg class="a" style="left:727px;top:441px;" width="14" height="14" viewBox="0 0 14 14"><path d="M7.5 2 V13 M2 7.5 H13" stroke="#6a6a6a" stroke-width="1"/></svg>
<div class="a" style="left:1361px;top:157px;width:15px;height:640px;background:#cacaca;border-right:1px solid #b2b2b2"></div>
<div class="a" style="left:1361px;top:157px;width:14px;height:13px;background:#fff;border:1px solid #bdbdbd"></div>
<svg class="a" style="left:1364px;top:160px;" width="8" height="6" viewBox="0 0 8 6"><path d="M0.5 5 L4 1 L7.5 5Z" fill="#444"/></svg>
<div class="a" style="left:1361px;top:170px;width:14px;height:226px;background:#fff;border:1px solid #bdbdbd"></div>
<div class="a" style="left:1376px;top:132px;width:250px;height:665px;background:#e5e5e5;border-left:6px solid #eaeaea"></div>
<div class="t" style="left:1388px;top:148.5px;font-size:18px;color:#a5483a;font-weight:600;font-weight:normal">设置形状格式</div>
<svg class="a" style="left:1601px;top:150px;" width="11" height="6" viewBox="0 0 11 6"><path d="M0.5 0.5 H10.5 L5.5 5.5Z" fill="#555"/></svg>
<div class="t" style="left:1392px;top:179.8px;font-size:11px;color:#262626;font-weight:600;font-weight:bold">形状选项</div>
<div class="t" style="left:1450px;top:179.8px;font-size:11px;color:#444;font-weight:500;">文本选项</div>
<div class="a" style="left:1389.5px;top:201.5px;width:26px;height:26px;background:#8f8f8f"></div>
<svg class="a" style="left:1389px;top:202px;" width="26" height="26" viewBox="0 0 26 26"><path d="M4 13 L12 5 L20 13 L12 21 Z" fill="#fff" stroke="#c0462c" stroke-width="1.2"/><path d="M10.5 2 Q12 1 12.5 3 V7.5" fill="none" stroke="#b04030" stroke-width="1.4"/><circle cx="12" cy="8.5" r="1.2" fill="#333"/><path d="M20 13 Q24 16 21 20.5 L16.5 17 Z" fill="#c8401c"/></svg>
<svg class="a" style="left:1427px;top:203px;" width="21" height="22" viewBox="0 0 21 22"><path d="M10.5 2 L19 8.5 L16 18 H5 L2 8.5 Z" fill="#fff" stroke="#555" stroke-width="1.2"/><path d="M5 18 H16" stroke="#333" stroke-width="1.6"/><path d="M5 18 L4 21 M16 18 L17 21" stroke="#555" stroke-width="1"/></svg>
<svg class="a" style="left:1462px;top:204px;" width="21" height="21" viewBox="0 0 21 21"><path d="M6.5 3.5 H19.5 M6.5 1 V5 M19.5 1 V5" stroke="#555" stroke-width="1"/><path d="M3 7 V19 M1 7 H5 M1 19 H5" stroke="#555" stroke-width="1"/><rect x="6" y="7" width="14" height="13" fill="#555"/><path d="M13 9 V18 M8 13.5 H18" stroke="#fff" stroke-width="0.9"/><path d="M11.5 10.5 L13 9 L14.5 10.5 M11.5 16.5 L13 18 L14.5 16.5 M9.5 12 L8 13.5 L9.5 15 M16.5 12 L18 13.5 L16.5 15" fill="none" stroke="#fff" stroke-width="0.8"/></svg>
<svg class="a" style="left:1388px;top:232px;" width="238" height="10" viewBox="0 0 238 10"><path d="M0 8.5 H8 L14 2.5 L20 8.5 H238" fill="none" stroke="#a0a0a0" stroke-width="1"/></svg>
<svg class="a" style="left:1393px;top:249.3px;" width="8" height="8" viewBox="0 0 8 8"><path d="M7.5 0.5 V7.5 H0.5 Z" fill="#333"/></svg>
<div class="t" style="left:1407px;top:248.3px;font-size:11px;color:#a5341f;font-weight:600;font-weight:bold">填充</div>
<svg class="a" style="left:1407px;top:275.6px;" width="11" height="11" viewBox="0 0 11 11"><circle cx="5.5" cy="5.5" r="4.7" fill="#fff" stroke="#8a8a8a" stroke-width="1"/></svg>
<div class="t" style="left:1422px;top:276.1px;font-size:11px;color:#3a3a3a;font-weight:500;">无填充(<u>N</u>)</div>
<svg class="a" style="left:1407px;top:297.1px;" width="11" height="11" viewBox="0 0 11 11"><circle cx="5.5" cy="5.5" r="4.7" fill="#fff" stroke="#8a8a8a" stroke-width="1"/><circle cx="5.5" cy="5.5" r="2.3" fill="#555"/></svg>
<div class="t" style="left:1422px;top:297.6px;font-size:11px;color:#3a3a3a;font-weight:500;">纯色填充(<u>S</u>)</div>
<svg class="a" style="left:1407px;top:318.8px;" width="11" height="11" viewBox="0 0 11 11"><circle cx="5.5" cy="5.5" r="4.7" fill="#fff" stroke="#8a8a8a" stroke-width="1"/></svg>
<div class="t" style="left:1422px;top:319.3px;font-size:11px;color:#3a3a3a;font-weight:500;">渐变填充(<u>G</u>)</div>
<svg class="a" style="left:1407px;top:340.8px;" width="11" height="11" viewBox="0 0 11 11"><circle cx="5.5" cy="5.5" r="4.7" fill="#fff" stroke="#8a8a8a" stroke-width="1"/></svg>
<div class="t" style="left:1422px;top:341.3px;font-size:11px;color:#3a3a3a;font-weight:500;">图片或纹理填充(<u>P</u>)</div>
<svg class="a" style="left:1407px;top:362.4px;" width="11" height="11" viewBox="0 0 11 11"><circle cx="5.5" cy="5.5" r="4.7" fill="#fff" stroke="#8a8a8a" stroke-width="1"/></svg>
<div class="t" style="left:1422px;top:362.9px;font-size:11px;color:#3a3a3a;font-weight:500;">图案填充(<u>A</u>)</div>
<svg class="a" style="left:1407px;top:384.4px;" width="11" height="11" viewBox="0 0 11 11"><circle cx="5.5" cy="5.5" r="4.7" fill="#fff" stroke="#8a8a8a" stroke-width="1"/></svg>
<div class="t" style="left:1422px;top:384.9px;font-size:11px;color:#3a3a3a;font-weight:500;">幻灯片背景填充(<u>B</u>)</div>
<div class="t" style="left:1415px;top:418.2px;font-size:11px;color:#3a3a3a;font-weight:500;">颜色(<u>C</u>)</div>
<div class="a" style="left:1596px;top:411px;width:40px;height:23.5px;background:#fff;border:1px solid #bcbcbc"></div>
<svg class="a" style="left:1604px;top:414px;" width="22" height="16" viewBox="0 0 22 16"><path d="M2 8 L7 3 L12 8 L7 13 Z" fill="#fff" stroke="#444" stroke-width="1.1"/><path d="M6 1 V5" stroke="#444" stroke-width="1"/><path d="M12 8 Q15 10 13 13 L10 11 Z" fill="#444"/><path d="M17.5 7 H21.5 L19.5 9.5Z" fill="#444"/></svg>
<div class="t" style="left:1415px;top:445.0px;font-size:11px;color:#3a3a3a;font-weight:500;">透明度(<u>T</u>)</div>
<div class="a" style="left:1469px;top:445px;width:1px;height:10px;background:#666"></div>
<div class="a" style="left:1469px;top:449.5px;width:71px;height:1px;background:#777"></div>
<div class="a" style="left:1544.5px;top:440.5px;width:90px;height:21.5px;background:#fff;border:1px solid #bcbcbc"></div>
<div class="t" style="left:1551px;top:446.2px;font-size:10.5px;color:#3a3a3a;font-weight:600;font-weight:normal">0%</div>
<svg class="a" style="left:1393px;top:480.2px;" width="8" height="8" viewBox="0 0 8 8"><path d="M7.5 0.5 V7.5 H0.5 Z" fill="#333"/></svg>
<div class="t" style="left:1407px;top:479.2px;font-size:11px;color:#a5341f;font-weight:600;font-weight:bold">线条</div>
<svg class="a" style="left:1407px;top:505.6px;" width="11" height="11" viewBox="0 0 11 11"><circle cx="5.5" cy="5.5" r="4.7" fill="#fff" stroke="#8a8a8a" stroke-width="1"/></svg>
<div class="t" style="left:1422px;top:506.1px;font-size:11px;color:#3a3a3a;font-weight:500;">无线条(<u>N</u>)</div>
<svg class="a" style="left:1407px;top:527.8px;" width="11" height="11" viewBox="0 0 11 11"><circle cx="5.5" cy="5.5" r="4.7" fill="#fff" stroke="#8a8a8a" stroke-width="1"/><circle cx="5.5" cy="5.5" r="2.3" fill="#555"/></svg>
<div class="t" style="left:1422px;top:528.3px;font-size:11px;color:#3a3a3a;font-weight:500;">实线(<u>S</u>)</div>
<svg class="a" style="left:1407px;top:549.5px;" width="11" height="11" viewBox="0 0 11 11"><circle cx="5.5" cy="5.5" r="4.7" fill="#fff" stroke="#8a8a8a" stroke-width="1"/></svg>
<div class="t" style="left:1422px;top:550.0px;font-size:11px;color:#3a3a3a;font-weight:500;">渐变线(<u>G</u>)</div>
<div class="t" style="left:1415px;top:583.2px;font-size:11px;color:#3a3a3a;font-weight:500;">颜色(<u>C</u>)</div>
<div class="a" style="left:1596px;top:576px;width:40px;height:23px;background:#e6a286;border:1px solid #c97a5c"></div>
<svg class="a" style="left:1603px;top:579px;" width="22" height="17" viewBox="0 0 22 17"><path d="M2 1 V11" stroke="#444" stroke-width="1"/><path d="M5 10 L12 3" stroke="#333" stroke-width="2"/><path d="M12 3 L14 1" stroke="#555" stroke-width="1.2"/><rect x="2" y="12.5" width="14" height="3" fill="#203a7a"/><path d="M18.5 7 H22 L20.25 9.5Z" fill="#333"/></svg>
<div class="t" style="left:1415px;top:609.7px;font-size:11px;color:#3a3a3a;font-weight:500;">透明度(<u>T</u>)</div>
<div class="a" style="left:1469px;top:610px;width:1px;height:10px;background:#666"></div>
<div class="a" style="left:1469px;top:614.5px;width:42px;height:1px;background:#777"></div>
<div class="t" style="left:1415px;top:638.7px;font-size:11px;color:#3a3a3a;font-weight:500;">宽度(<u>W</u>)</div>
<div class="t" style="left:1415px;top:668.0px;font-size:11px;color:#3a3a3a;font-weight:500;">复合类型(<u>C</u>)</div>
<div class="t" style="left:1415px;top:695.7px;font-size:11px;color:#3a3a3a;font-weight:500;">短划线类型(<u>D</u>)</div>
<div class="t" style="left:1415px;top:723.3px;font-size:11px;color:#3a3a3a;font-weight:500;">线端类型(<u>A</u>)</div>
<div class="t" style="left:1415px;top:749.1px;font-size:11px;color:#3a3a3a;font-weight:500;">连接类型(<u>J</u>)</div>
<div class="t" style="left:1415px;top:775.0px;font-size:11px;color:#9a9a9a;font-weight:500;">开始箭头类型(<u>B</u>)</div>
<div class="a" style="left:1511px;top:599px;width:118px;height:200px;background:#fff;border:1px solid #c6c6c6;box-shadow:-1px 1px 3px rgba(0,0,0,.18)"></div>
<div class="a" style="left:1512px;top:601px;width:114px;height:20px;background:#ececec"></div>
<div class="t" style="left:1519px;top:606.4px;font-size:11px;color:#444;font-weight:500;">主题颜色</div>
<div class="a" style="left:1514.0px;top:624.5px;width:10px;height:10px;background:#ffffff;border:1px solid #e0e0e0"></div>
<div class="a" style="left:1514.0px;top:640px;width:10px;height:11px;background:#e9e9e9"></div>
<div class="a" style="left:1514.0px;top:651px;width:10px;height:11px;background:#c9c9c9"></div>
<div class="a" style="left:1514.0px;top:662px;width:10px;height:11px;background:#a9a9a9"></div>
<div class="a" style="left:1514.0px;top:673px;width:10px;height:11px;background:#8b8b8b"></div>
<div class="a" style="left:1514.0px;top:684px;width:10px;height:11px;background:#696969"></div>
<div class="a" style="left:1528.9px;top:624.5px;width:10px;height:10px;background:#000000"></div>
<div class="a" style="left:1528.9px;top:640px;width:10px;height:11px;background:#636363"></div>
<div class="a" style="left:1528.9px;top:651px;width:10px;height:11px;background:#444444"></div>
<div class="a" style="left:1528.9px;top:662px;width:10px;height:11px;background:#2f2f2f"></div>
<div class="a" style="left:1528.9px;top:673px;width:10px;height:11px;background:#222222"></div>
<div class="a" style="left:1528.9px;top:684px;width:10px;height:11px;background:#111111"></div>
<div class="a" style="left:1543.8px;top:624.5px;width:10px;height:10px;background:#e4e4e4"></div>
<div class="a" style="left:1543.8px;top:640px;width:10px;height:11px;background:#b6b6b6"></div>
<div class="a" style="left:1543.8px;top:651px;width:10px;height:11px;background:#8f8f8f"></div>
<div class="a" style="left:1543.8px;top:662px;width:10px;height:11px;background:#5b5757"></div>
<div class="a" style="left:1543.8px;top:673px;width:10px;height:11px;background:#302e2e"></div>
<div class="a" style="left:1543.8px;top:684px;width:10px;height:11px;background:#1a1919"></div>
<div class="a" style="left:1558.7px;top:624.5px;width:10px;height:10px;background:#36455e"></div>
<div class="a" style="left:1558.7px;top:640px;width:10px;height:11px;background:#c6ccd4"></div>
<div class="a" style="left:1558.7px;top:651px;width:10px;height:11px;background:#8e9aac"></div>
<div class="a" style="left:1558.7px;top:662px;width:10px;height:11px;background:#5d6e87"></div>
<div class="a" style="left:1558.7px;top:673px;width:10px;height:11px;background:#253042"></div>
<div class="a" style="left:1558.7px;top:684px;width:10px;height:11px;background:#1d2331"></div>
<div class="a" style="left:1573.6px;top:624.5px;width:10px;height:10px;background:#2f5ab3"></div>
<div class="a" style="left:1573.6px;top:640px;width:10px;height:11px;background:#d3dbeb"></div>
<div class="a" style="left:1573.6px;top:651px;width:10px;height:11px;background:#98aed6"></div>
<div class="a" style="left:1573.6px;top:662px;width:10px;height:11px;background:#6c8dcb"></div>
<div class="a" style="left:1573.6px;top:673px;width:10px;height:11px;background:#1f4a96"></div>
<div class="a" style="left:1573.6px;top:684px;width:10px;height:11px;background:#17336c"></div>
<div class="a" style="left:1588.5px;top:624.5px;width:10px;height:10px;background:#cb5a12"></div>
<div class="a" style="left:1588.5px;top:640px;width:10px;height:11px;background:#f6dfcf"></div>
<div class="a" style="left:1588.5px;top:651px;width:10px;height:11px;background:#e8b28f"></div>
<div class="a" style="left:1588.5px;top:662px;width:10px;height:11px;background:#da8b5a"></div>
<div class="a" style="left:1588.5px;top:673px;width:10px;height:11px;background:#b8420b"></div>
<div class="a" style="left:1588.5px;top:684px;width:10px;height:11px;background:#7a2b06"></div>
<div class="a" style="left:1603.4px;top:624.5px;width:10px;height:10px;background:#7a7a7a"></div>
<div class="a" style="left:1603.4px;top:640px;width:10px;height:11px;background:#e6e6e6"></div>
<div class="a" style="left:1603.4px;top:651px;width:10px;height:11px;background:#c9c9c9"></div>
<div class="a" style="left:1603.4px;top:662px;width:10px;height:11px;background:#a6a6a6"></div>
<div class="a" style="left:1603.4px;top:673px;width:10px;height:11px;background:#5a5a5a"></div>
<div class="a" style="left:1603.4px;top:684px;width:10px;height:11px;background:#3f3f3f"></div>
<div class="a" style="left:1618.3px;top:624.5px;width:10px;height:10px;background:#d9a400"></div>
<div class="a" style="left:1618.3px;top:640px;width:10px;height:11px;background:#faedc0"></div>
<div class="a" style="left:1618.3px;top:651px;width:10px;height:11px;background:#f6e08a"></div>
<div class="a" style="left:1618.3px;top:662px;width:10px;height:11px;background:#efcb50"></div>
<div class="a" style="left:1618.3px;top:673px;width:10px;height:11px;background:#9f7a00"></div>
<div class="a" style="left:1618.3px;top:684px;width:10px;height:11px;background:#6b5200"></div>
<div class="a" style="left:1512px;top:701px;width:114px;height:18px;background:#ececec"></div>
<div class="t" style="left:1519px;top:705.0px;font-size:11px;color:#444;font-weight:500;">标准色</div>
<div class="a" style="left:1514.3px;top:723.3px;width:10px;height:9.5px;background:#c00000"></div>
<div class="a" style="left:1529.2px;top:723.3px;width:10px;height:9.5px;background:#ff0000"></div>
<div class="a" style="left:1544.1px;top:723.3px;width:10px;height:9.5px;background:#e3a000"></div>
<div class="a" style="left:1559.0px;top:723.3px;width:10px;height:9.5px;background:#ffff00"></div>
<div class="a" style="left:1573.9px;top:723.3px;width:10px;height:9.5px;background:#6aaa3a"></div>
<div class="a" style="left:1588.8px;top:723.3px;width:10px;height:9.5px;background:#00a040"></div>
<div class="a" style="left:1603.7px;top:723.3px;width:10px;height:9.5px;background:#0a90d0"></div>
<div class="a" style="left:1618.6px;top:723.3px;width:10px;height:9.5px;background:#0060b8"></div>
<div class="a" style="left:1512px;top:739px;width:114px;height:17px;background:#ececec"></div>
<div class="t" style="left:1519px;top:741.4px;font-size:11px;color:#444;font-weight:500;">最近使用的颜色</div>
<div class="a" style="left:1515.0px;top:760px;width:9.5px;height:9px;background:#d89400"></div>
<div class="a" style="left:1529.8px;top:760px;width:9.5px;height:9px;background:#e2b400"></div>
<div class="a" style="left:1544.6px;top:760px;width:9.5px;height:9px;background:#f0dc20"></div>
<svg class="a" style="left:1513px;top:774px;" width="14" height="14" viewBox="0 0 14 14"><circle cx="7" cy="7" r="5" fill="#d4c060"/></svg>
<div class="t" style="left:1532px;top:776.3px;font-size:11px;color:#444;font-weight:500;">其他颜色(<u>M</u>)...</div>
<div class="t" style="left:1532px;top:792.0px;font-size:11px;color:#444;font-weight:500;">取色器</div>
<div class="a" style="left:1474px;top:730px;width:84px;height:84px;border-radius:50%;background:radial-gradient(circle closest-side,rgba(238,234,40,.8) 0%,rgba(238,234,40,.76) 78%,rgba(238,234,40,.35) 92%,rgba(238,234,40,0) 100%)"></div>
<svg class="a" style="left:1515px;top:767px;" width="15" height="24" viewBox="0 0 15 24"><path d="M1 1 V18 L5 14.5 L8.5 22 L11 21 L7.8 13.5 H13 Z" fill="#fff" stroke="#111" stroke-width="1" stroke-linejoin="round"/></svg>
</body></html>
